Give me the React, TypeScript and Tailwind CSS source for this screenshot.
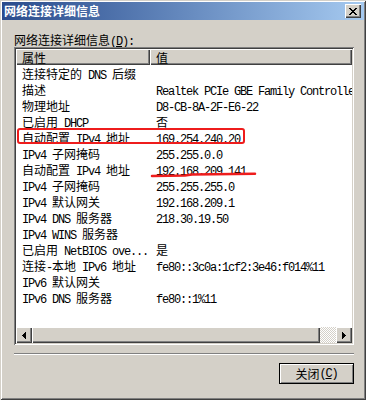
import React from "react";

const CJK = "font-['Noto_Sans_CJK_SC',sans-serif] text-[12px] leading-[16px]";
const LAT = "font-['Liberation_Mono',monospace] text-[12px] leading-[16px] tracking-[-1.2px]";

function T({ s }: { s: string }) {
  const parts = s.match(/[\x00-\xff]+|[^\x00-\xff]+/g) || [];
  return (
    <>
      {parts.map((p, i) =>
        /[\x00-\xff]/.test(p[0]) ? (
          <span key={i} className={LAT}>{p}</span>
        ) : (
          <span key={i} className={CJK}>{p}</span>
        )
      )}
    </>
  );
}

const rows: [string, string][] = [
  ["连接特定的 DNS 后缀", ""],
  ["描述", "Realtek PCIe GBE Family Controller"],
  ["物理地址", "D8-CB-8A-2F-E6-22"],
  ["已启用 DHCP", "否"],
  ["自动配置 IPv4 地址", "169.254.240.20"],
  ["IPv4 子网掩码", "255.255.0.0"],
  ["自动配置 IPv4 地址", "192.168.209.141"],
  ["IPv4 子网掩码", "255.255.255.0"],
  ["IPv4 默认网关", "192.168.209.1"],
  ["IPv4 DNS 服务器", "218.30.19.50"],
  ["IPv4 WINS 服务器", ""],
  ["已启用 NetBIOS ove...", "是"],
  ["连接-本地 IPv6 地址", "fe80::3c0a:1cf2:3e46:f014%11"],
  ["IPv6 默认网关", ""],
  ["IPv6 DNS 服务器", "fe80::1%11"],
];

const RAISED =
  "shadow-[inset_1px_1px_#ffffff,inset_-1px_-1px_#404040,inset_-2px_-2px_#808080]";

function Arrow({ dir }: { dir: "l" | "r" }) {
  const cols = dir === "l" ? [0, 1, 2, 3] : [3, 2, 1, 0];
  return (
    <svg width="4" height="7" viewBox="0 0 4 7" shapeRendering="crispEdges">
      {cols.map((c, i) => (
        <rect key={i} x={c} y={3 - i} width="1" height={1 + 2 * i} fill="#000" />
      ))}
    </svg>
  );
}

export default function App() {
  return (
    <div className="relative w-[366px] h-[400px] bg-[#d4d0c8] p-[2px] flex flex-col overflow-hidden shadow-[inset_1px_1px_#d4d0c8,inset_-1px_-1px_#404040,inset_2px_2px_#ffffff,inset_-2px_-2px_#808080]">
      {/* Title bar */}
      <div className="h-[18px] flex items-center justify-between bg-linear-to-r from-[#2a4b8c] to-[#a6caf0] pl-[2px] pr-[3px]">
        <span className="font-['Noto_Sans_CJK_SC',sans-serif] text-[12px] font-bold text-white leading-[18px]">
          网络连接详细信息
        </span>
        <div className={`w-[16px] h-[14px] bg-[#d4d0c8] flex items-center justify-center ${RAISED}`}>
          <svg width="8" height="7" viewBox="0 0 8 7" shapeRendering="crispEdges">
            {[
              [0, 0, 2], [6, 0, 2], [1, 1, 2], [5, 1, 2], [2, 2, 4], [3, 3, 2], [2, 4, 4], [1, 5, 2], [5, 5, 2], [0, 6, 2], [6, 6, 2],
            ].map(([x, y, w], i) => (
              <rect key={i} x={x} y={y} width={w} height="1" fill="#000" />
            ))}
          </svg>
        </div>
      </div>

      {/* Content */}
      <div className="flex flex-col pl-[12px] pr-[10px]">
        <div className="mt-[11px] h-[16px] leading-[16px] whitespace-nowrap text-black">
          <span className={CJK}>网络连接详细信息</span>
          <span className={LAT}>(</span>
          <span className={`${LAT} underline`}>D</span>
          <span className={LAT}>):</span>
        </div>

        {/* List view */}
        <div className="w-[340px] h-[298px] p-[2px] bg-white flex flex-col shadow-[inset_1px_1px_#808080,inset_-1px_-1px_#ffffff,inset_2px_2px_#404040,inset_-2px_-2px_#d4d0c8]">
          <div className="h-[16px] flex bg-[#d4d0c8] shrink-0">
            <div className={`w-[134px] pl-[6px] leading-[16px] ${RAISED}`}>
              <T s="属性" />
            </div>
            <div className={`flex-1 pl-[6px] leading-[16px] ${RAISED}`}>
              <T s="值" />
            </div>
          </div>
          <div className="h-[262px] flex flex-col overflow-hidden">
            {rows.map(([k, v], i) => (
              <div key={i} className="h-[16px] flex leading-[16px] whitespace-nowrap text-black shrink-0">
                <div className="w-[134px] shrink-0 pl-[6px]">
                  <T s={k} />
                </div>
                <div className="pl-[6px]">
                  <T s={v} />
                </div>
              </div>
            ))}
          </div>
          <div className="h-[16px] flex shrink-0">
            <div className={`w-[16px] bg-[#d4d0c8] flex items-center justify-center ${RAISED}`}>
              <Arrow dir="l" />
            </div>
            <div className={`w-[288px] bg-[#d4d0c8] ${RAISED}`} />
            <div className="w-[16px] [background-image:repeating-conic-gradient(#d4d0c8_0%_25%,#ffffff_0%_50%)] [background-size:2px_2px]" />
            <div className={`w-[16px] bg-[#d4d0c8] flex items-center justify-center ${RAISED}`}>
              <Arrow dir="r" />
            </div>
          </div>
        </div>

        {/* Separator */}
        <div className="mt-[8px] w-[340px] h-[2px] border-t border-t-[#808080] border-b border-b-white" />

        {/* Close button */}
        <div className="mt-[8px] self-end w-[75px] h-[21px] border border-black bg-[#d4d0c8] flex items-center justify-center leading-[19px] shadow-[inset_1px_1px_#ffffff,inset_-1px_-1px_#808080]">
          <span className={CJK}>关闭</span>
          <span className={LAT}>(</span>
          <span className={`${LAT} underline`}>C</span>
          <span className={LAT}>)</span>
        </div>
      </div>

      {/* Red annotations */}
      <svg className="absolute inset-0 pointer-events-none" width="366" height="400">
        <rect x="18" y="129" width="226" height="14" rx="2" fill="none" stroke="#ee1c1c" strokeWidth="2" />
        <path d="M152 176 L 185 175.5 L 192 174.5 L 255 173.8" fill="none" stroke="#ee1c1c" strokeWidth="2.5" strokeLinecap="round" />
      </svg>
    </div>
  );
}
